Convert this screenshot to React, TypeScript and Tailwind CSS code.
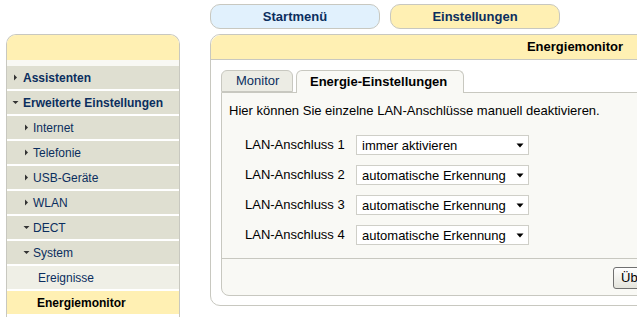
import React from "react";

const navy = "text-[#0b2e5e]";

function Arrow({ open }: { open: boolean }) {
  return (
    <svg width="7" height="7" viewBox="0 0 7 7" className="shrink-0">
      {open ? (
        <polygon points="0.5,2 6.5,2 3.5,5" fill="#333" />
      ) : (
        <polygon points="2,0.5 5,3.5 2,6.5" fill="#333" />
      )}
    </svg>
  );
}

type NavItem = {
  label: string;
  level: 0 | 1 | 2;
  open?: boolean;
  active?: boolean;
};

const navItems: NavItem[] = [
  { label: "Assistenten", level: 0, open: false },
  { label: "Erweiterte Einstellungen", level: 0, open: true },
  { label: "Internet", level: 1, open: false },
  { label: "Telefonie", level: 1, open: false },
  { label: "USB-Geräte", level: 1, open: false },
  { label: "WLAN", level: 1, open: false },
  { label: "DECT", level: 1, open: true },
  { label: "System", level: 1, open: true },
  { label: "Ereignisse", level: 2 },
  { label: "Energiemonitor", level: 2, active: true },
];

function Sidebar() {
  return (
    <div className="w-[174px] shrink-0 mt-[34px] border-x border-t border-[#c8c8c0] rounded-t-[10px] overflow-hidden bg-white">
      <div className="h-[25px] bg-[#fff0b3]" />
      <div className="h-[6px] bg-[#f8f8f3]" />
      {navItems.map((item) => {
        if (item.level === 0) {
          return (
            <div key={item.label} className="h-[23px] mb-[2px] bg-[#dfdfd1] flex items-center pl-[5px] gap-[4px]">
              <Arrow open={!!item.open} />
              <span className={`text-[12px] font-bold ${navy}`}>{item.label}</span>
            </div>
          );
        }
        if (item.level === 1) {
          return (
            <div key={item.label} className="h-[23px] mb-[2px] bg-[#dfdfd1] flex items-center pl-[16px] gap-[3px]">
              <Arrow open={!!item.open} />
              <span className={`text-[12px] ${navy}`}>{item.label}</span>
            </div>
          );
        }
        return (
          <div
            key={item.label}
            className={`h-[23px] mb-[2px] flex items-center pl-[31px] ${item.active ? "bg-[#fff0b3]" : "bg-[#efefe6]"}`}
          >
            <span className={`text-[12px] ${item.active ? "font-bold text-black -ml-px" : navy}`}>{item.label}</span>
          </div>
        );
      })}
    </div>
  );
}

function FakeSelect({ value }: { value: string }) {
  return (
    <div className="w-[173px] h-[20px] bg-white border border-[#cfcfc8] flex items-center pl-[5px] pr-[3px]">
      <span className="flex-1 text-[13px] text-black leading-none">{value}</span>
      <svg width="8" height="5" viewBox="0 0 8 5" className="mr-[1px]">
        <polygon points="0.5,0.5 7.5,0.5 4,4.5" fill="#000" />
      </svg>
    </div>
  );
}

const ports = [
  { label: "LAN-Anschluss 1", value: "immer aktivieren" },
  { label: "LAN-Anschluss 2", value: "automatische Erkennung" },
  { label: "LAN-Anschluss 3", value: "automatische Erkennung" },
  { label: "LAN-Anschluss 4", value: "automatische Erkennung" },
];

function MainPanel() {
  return (
    <div className="w-[440px] shrink-0">
      <div className="flex gap-[10px] pt-[4px]">
        <div className={`w-[170px] h-[25px] rounded-[10px] border border-[#c8c8c0] bg-[#e1f1fd] flex items-center justify-center text-[13px] font-bold ${navy}`}>
          Startmenü
        </div>
        <div className={`w-[170px] h-[25px] rounded-[10px] border border-[#c8c8c0] bg-[#fff0b3] flex items-center justify-center text-[13px] font-bold ${navy}`}>
          Einstellungen
        </div>
      </div>

      <div className="mt-[5px] border border-[#c8c8c0] rounded-[10px] bg-white">
        <div className="h-[25px] bg-[#fff0b3] border-b border-[#c8c8c0] rounded-t-[10px] flex items-center justify-end pr-[26px] text-[13px] font-bold text-black">
          Energiemonitor
        </div>

        <div className="pl-[10px] pt-[10px] pb-[9px]">
          <div className="flex gap-[3px] items-end">
            <div className={`w-[72px] h-[22px] border border-[#c8c8c0] rounded-t-[6px] bg-[#ecece4] flex items-center pl-[14px] text-[13px] ${navy}`}>
              Monitor
            </div>
            <div className="relative z-10 w-[168px] h-[23px] -mb-px border border-b-0 border-[#c8c8c0] rounded-t-[6px] bg-[#f9f9f5] flex items-center pl-[13px] pb-px text-[13px] font-bold text-black">
              Energie-Einstellungen
            </div>
          </div>

          <div className="border border-[#c8c8c0] rounded-bl-[8px] bg-[#f9f9f5]">
            <div className="pt-[10px] pl-[7px] pb-[13px]">
              <p className="text-[13px] leading-[16px] text-black">
                Hier können Sie einzelne LAN-Anschlüsse manuell deaktivieren.
              </p>
              <div className="mt-[16px] pl-[16px] flex flex-col gap-[10px]">
                {ports.map((p) => (
                  <div key={p.label} className="flex items-center">
                    <span className="w-[111px] text-[13px] text-black">{p.label}</span>
                    <FakeSelect value={p.value} />
                  </div>
                ))}
              </div>
            </div>
            <div className="border-t border-[#c8c8c0] h-[37px] pt-[8px] pl-[391px]">
              <div className="w-[90px] h-[22px] border border-[#707070] rounded-[3px] bg-gradient-to-b from-white to-[#e4e4dc] flex items-center pl-[7px] text-[13px] text-black whitespace-nowrap">
                Übernehmen
              </div>
            </div>
          </div>
        </div>
      </div>
    </div>
  );
}

export default function App() {
  return (
    <div
      className="w-[637px] h-[317px] overflow-hidden bg-white flex pl-[6px] gap-[30px]"
      style={{ fontFamily: '"Liberation Sans", Arial, sans-serif' }}
    >
      <Sidebar />
      <MainPanel />
    </div>
  );
}
